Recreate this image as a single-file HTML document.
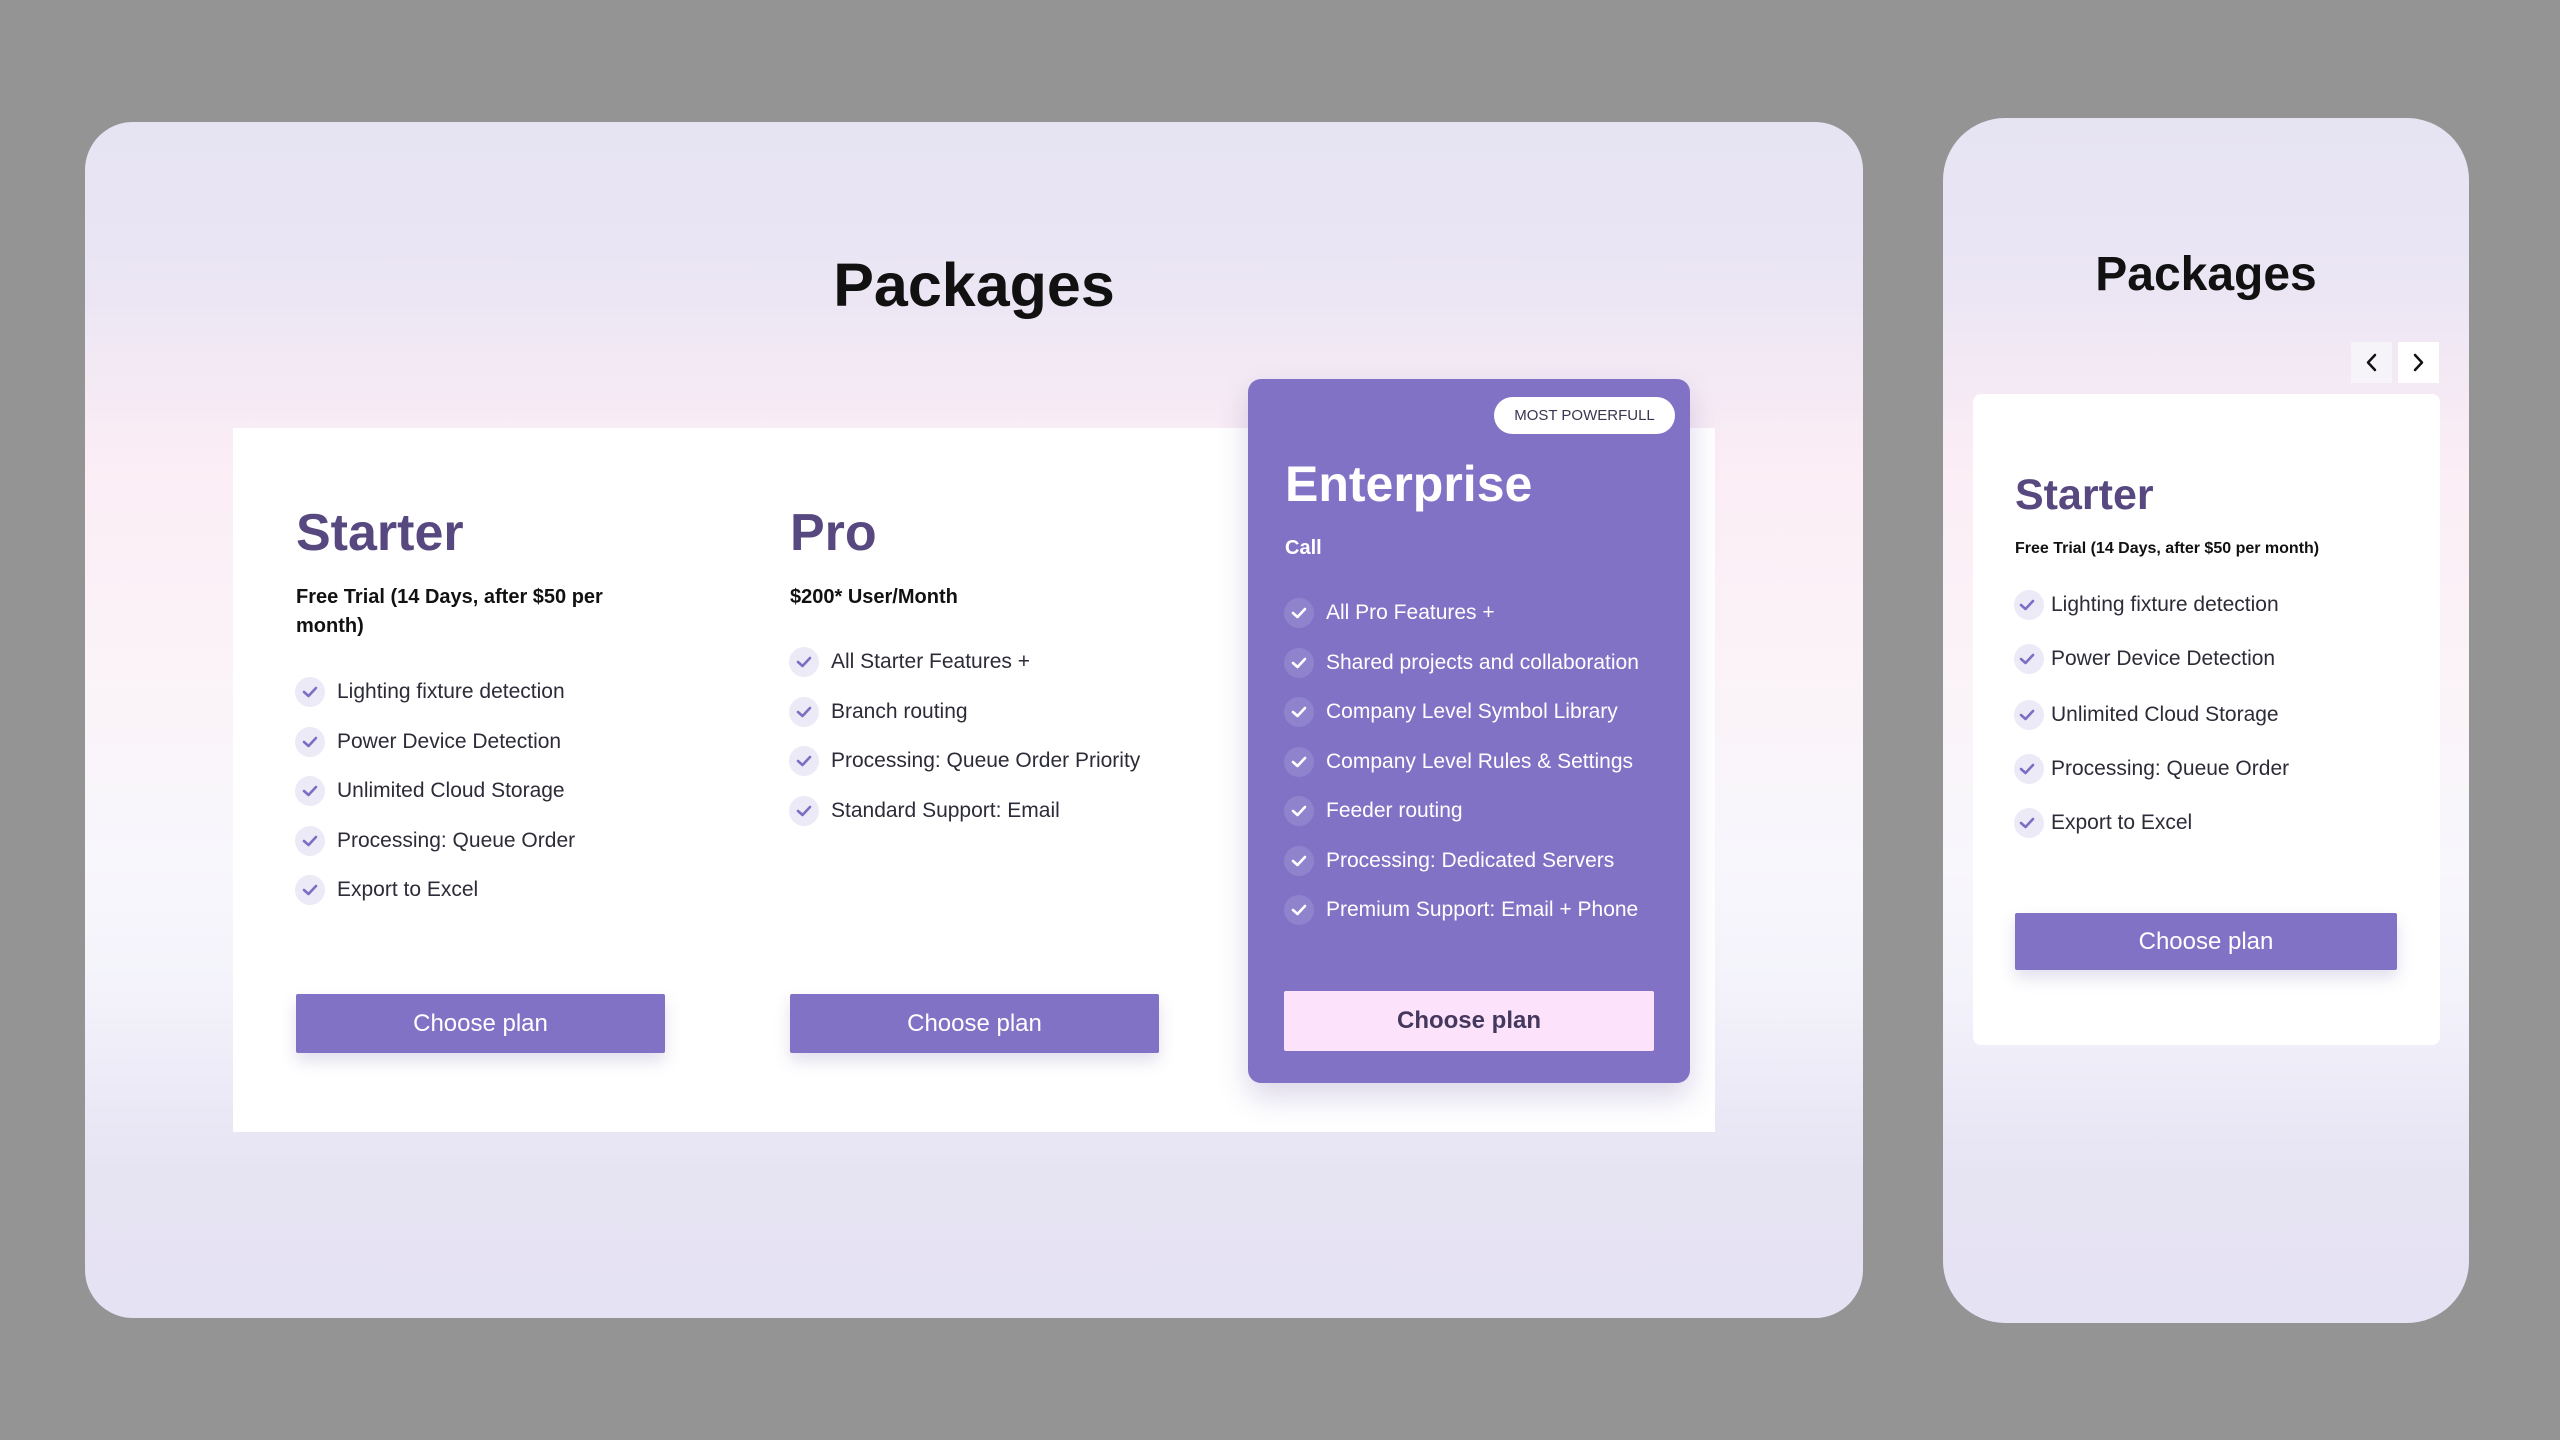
<!DOCTYPE html>
<html><head><meta charset="utf-8"><style>
*{margin:0;padding:0;box-sizing:border-box}
body{width:2560px;height:1440px;background:#949494;position:relative;overflow:hidden;font-family:"Liberation Sans",sans-serif}
.abs{position:absolute}
.panel{position:absolute;background:linear-gradient(180deg,#e6e3f3 0%,#ece6f4 15%,#fbedf5 28%,#fbf3f8 45%,#f8f7fc 62%,#f4f3fb 72%,#e6e3f3 88%,#e5e2f3 100%)}
.f{position:absolute;height:30px;line-height:30px;font-size:21px;color:#2c2c38;white-space:nowrap;padding-left:42px}
.f::before{content:"";position:absolute;left:0;top:0;width:30px;height:30px;border-radius:50%;background:#eceaf6}
.f svg{position:absolute;left:7px;top:8px}
.w{color:#fff}
.w::before{background:rgba(255,255,255,.12)}
.h{position:absolute;font-weight:bold;color:#57487f;font-size:52px;line-height:60px}
.sub{position:absolute;font-weight:bold;font-size:20px;line-height:29px;color:#111}
.btn{position:absolute;background:#8172c6;color:#fff;font-size:24px;text-align:center;border-radius:2px;box-shadow:0 8px 16px rgba(90,70,150,.18)}
</style></head><body>
<svg width="0" height="0" style="position:absolute"><defs><symbol id="ck" viewBox="0 0 16 14"><path d="M2 7 L6.5 11 L14 3" fill="none" stroke-width="2.6" stroke-linecap="round" stroke-linejoin="round"/></symbol></defs></svg>

<div class="panel" style="left:85px;top:122px;width:1778px;height:1196px;border-radius:48px"></div>
<div class="abs" style="left:85px;width:1778px;top:245px;text-align:center;font-size:61px;font-weight:bold;color:#111;line-height:80px">Packages</div>
<div class="abs" style="left:233px;top:428px;width:1482px;height:704px;background:#fff"></div>

<div class="h" style="left:296px;top:503px">Starter</div>
<div class="sub" style="left:296px;top:583px">Free Trial (14 Days, after $50 per<br>month)</div>
<div class="f" style="left:295px;top:677px"><svg width="16" height="14"><use href="#ck" stroke="#7d6ec4"/></svg>Lighting fixture detection</div>
<div class="f" style="left:295px;top:727px"><svg width="16" height="14"><use href="#ck" stroke="#7d6ec4"/></svg>Power Device Detection</div>
<div class="f" style="left:295px;top:776px"><svg width="16" height="14"><use href="#ck" stroke="#7d6ec4"/></svg>Unlimited Cloud Storage</div>
<div class="f" style="left:295px;top:826px"><svg width="16" height="14"><use href="#ck" stroke="#7d6ec4"/></svg>Processing: Queue Order</div>
<div class="f" style="left:295px;top:875px"><svg width="16" height="14"><use href="#ck" stroke="#7d6ec4"/></svg>Export to Excel</div>
<div class="btn" style="left:296px;top:994px;width:369px;height:59px;line-height:59px">Choose plan</div>

<div class="h" style="left:790px;top:503px">Pro</div>
<div class="sub" style="left:790px;top:583px">$200* User/Month</div>
<div class="f" style="left:789px;top:647px"><svg width="16" height="14"><use href="#ck" stroke="#7d6ec4"/></svg>All Starter Features +</div>
<div class="f" style="left:789px;top:697px"><svg width="16" height="14"><use href="#ck" stroke="#7d6ec4"/></svg>Branch routing</div>
<div class="f" style="left:789px;top:746px"><svg width="16" height="14"><use href="#ck" stroke="#7d6ec4"/></svg>Processing: Queue Order Priority</div>
<div class="f" style="left:789px;top:796px"><svg width="16" height="14"><use href="#ck" stroke="#7d6ec4"/></svg>Standard Support: Email</div>
<div class="btn" style="left:790px;top:994px;width:369px;height:59px;line-height:59px">Choose plan</div>

<div class="abs" style="left:1248px;top:379px;width:442px;height:704px;background:#8172c6;border-radius:13px;box-shadow:0 14px 30px rgba(90,70,150,.22)"></div>
<div class="abs" style="left:1494px;top:397px;width:181px;height:37px;border-radius:19px;background:#fff;color:#3a3550;font-size:15px;text-align:center;line-height:37px">MOST POWERFULL</div>
<div class="h" style="left:1285px;top:454px;color:#fff;font-size:50px">Enterprise</div>
<div class="sub" style="left:1285px;top:534px;color:#fff">Call</div>
<div class="f w" style="left:1284px;top:598px"><svg width="16" height="14"><use href="#ck" stroke="#fff"/></svg>All Pro Features +</div>
<div class="f w" style="left:1284px;top:648px"><svg width="16" height="14"><use href="#ck" stroke="#fff"/></svg>Shared projects and collaboration</div>
<div class="f w" style="left:1284px;top:697px"><svg width="16" height="14"><use href="#ck" stroke="#fff"/></svg>Company Level Symbol Library</div>
<div class="f w" style="left:1284px;top:747px"><svg width="16" height="14"><use href="#ck" stroke="#fff"/></svg>Company Level Rules &amp; Settings</div>
<div class="f w" style="left:1284px;top:796px"><svg width="16" height="14"><use href="#ck" stroke="#fff"/></svg>Feeder routing</div>
<div class="f w" style="left:1284px;top:846px"><svg width="16" height="14"><use href="#ck" stroke="#fff"/></svg>Processing: Dedicated Servers</div>
<div class="f w" style="left:1284px;top:895px"><svg width="16" height="14"><use href="#ck" stroke="#fff"/></svg>Premium Support: Email + Phone</div>
<div class="btn" style="left:1284px;top:991px;width:370px;height:60px;line-height:60px;background:#fde2fb;color:#45385f;font-weight:bold;box-shadow:none">Choose plan</div>

<div class="panel" style="left:1943px;top:118px;width:526px;height:1205px;border-radius:62px"></div>
<div class="abs" style="left:1943px;width:526px;top:240px;text-align:center;font-size:48px;font-weight:bold;color:#111;line-height:70px">Packages</div>
<div class="abs" style="left:2351px;top:342px;width:41px;height:41px;background:#f6f4f9"><svg width="41" height="41"><path d="M24 13 L17 20.5 L24 28" fill="none" stroke="#111" stroke-width="2.5" stroke-linecap="round" stroke-linejoin="round"/></svg></div>
<div class="abs" style="left:2398px;top:342px;width:41px;height:41px;background:#fff"><svg width="41" height="41"><path d="M17 13 L24 20.5 L17 28" fill="none" stroke="#111" stroke-width="2.5" stroke-linecap="round" stroke-linejoin="round"/></svg></div>
<div class="abs" style="left:1973px;top:394px;width:467px;height:651px;background:#fff;border-radius:8px"></div>
<div class="h" style="left:2015px;top:465px;font-size:43px">Starter</div>
<div class="sub" style="left:2015px;top:534px;font-size:16px">Free Trial (14 Days, after $50 per month)</div>
<div class="f" style="left:2014px;top:590px;font-size:21px;padding-left:37px"><svg width="16" height="14" style="left:5px"><use href="#ck" stroke="#7d6ec4"/></svg>Lighting fixture detection</div>
<div class="f" style="left:2014px;top:644px;font-size:21px;padding-left:37px"><svg width="16" height="14" style="left:5px"><use href="#ck" stroke="#7d6ec4"/></svg>Power Device Detection</div>
<div class="f" style="left:2014px;top:700px;font-size:21px;padding-left:37px"><svg width="16" height="14" style="left:5px"><use href="#ck" stroke="#7d6ec4"/></svg>Unlimited Cloud Storage</div>
<div class="f" style="left:2014px;top:754px;font-size:21px;padding-left:37px"><svg width="16" height="14" style="left:5px"><use href="#ck" stroke="#7d6ec4"/></svg>Processing: Queue Order</div>
<div class="f" style="left:2014px;top:808px;font-size:21px;padding-left:37px"><svg width="16" height="14" style="left:5px"><use href="#ck" stroke="#7d6ec4"/></svg>Export to Excel</div>
<div class="btn" style="left:2015px;top:913px;width:382px;height:57px;line-height:57px">Choose plan</div>
</body></html>
